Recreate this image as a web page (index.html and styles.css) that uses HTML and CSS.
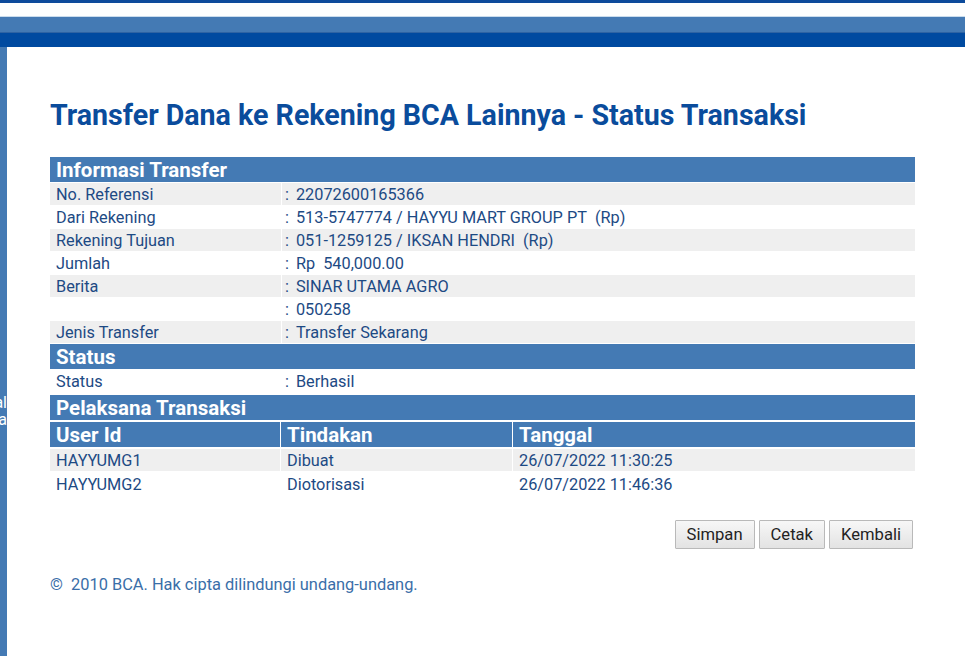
FILE: index.html
```html
<!DOCTYPE html>
<html lang="id">
<head>
  <meta charset="UTF-8" />
  <title>KlikBCA • Status Transaksi</title>
  <link rel="stylesheet" href="styles.css">
</head>
<body>

<header class="topbar">
  <div class="topbar-line"></div>
  <div class="topbar-gap"></div>
  <div class="topbar-mid"></div>
  <div class="topbar-dark"></div>
</header>

<div class="frame">
  <aside class="sidebar">
    <span class="side-word">al</span>
    <span class="side-word">a</span>
  </aside>

  <main class="content">
    <h1 class="page-title">Transfer Dana ke Rekening BCA Lainnya - Status Transaksi</h1>

    <table class="info-table">
      <tr><th colspan="2" class="section-head">Informasi Transfer</th></tr>
      <tr class="shade"><td class="label">No. Referensi</td><td class="value"><span class="colon">:</span>22072600165366</td></tr>
      <tr><td class="label">Dari Rekening</td><td class="value"><span class="colon">:</span>513-5747774 / HAYYU MART GROUP PT&nbsp; (Rp)</td></tr>
      <tr class="shade"><td class="label">Rekening Tujuan</td><td class="value"><span class="colon">:</span>051-1259125 / IKSAN HENDRI&nbsp; (Rp)</td></tr>
      <tr><td class="label">Jumlah</td><td class="value"><span class="colon">:</span>Rp&nbsp; 540,000.00</td></tr>
      <tr class="shade"><td class="label">Berita</td><td class="value"><span class="colon">:</span>SINAR UTAMA AGRO</td></tr>
      <tr><td class="label"></td><td class="value"><span class="colon">:</span>050258</td></tr>
      <tr class="shade"><td class="label">Jenis Transfer</td><td class="value"><span class="colon">:</span>Transfer Sekarang</td></tr>
      <tr><th colspan="2" class="section-head">Status</th></tr>
      <tr><td class="label">Status</td><td class="value"><span class="colon">:</span>Berhasil</td></tr>
    </table>

    <table class="info-table actor-table">
      <tr><th colspan="3" class="section-head">Pelaksana Transaksi</th></tr>
      <tr class="col-head">
        <th class="col-user">User Id</th>
        <th class="col-action">Tindakan</th>
        <th>Tanggal</th>
      </tr>
      <tr class="shade"><td>HAYYUMG1</td><td>Dibuat</td><td>26/07/2022 11:30:25</td></tr>
      <tr><td>HAYYUMG2</td><td>Diotorisasi</td><td>26/07/2022 11:46:36</td></tr>
    </table>

    <div class="actions">
      <button class="btn">Simpan</button>
      <button class="btn">Cetak</button>
      <button class="btn">Kembali</button>
    </div>

    <p class="copyright">©&nbsp; 2010 BCA. Hak cipta dilindungi undang-undang.</p>
  </main>
</div>

</body>
</html>
```

FILE: styles.css
```css
:root {
  --navy: #0a4c9c;
  --band: #447ab4;
  --band-dark: #004aa0;
  --row: #efefef;
  --ink: #1d4a84;
}

* { margin: 0; padding: 0; box-sizing: border-box; }

html, body {
  height: 100%;
  background: #fff;
  font-family: Roboto, "Liberation Sans", sans-serif;
  overflow: hidden;
}

/* top bands */
.topbar-line { height: 3px; background: #0b4a9b; }
.topbar-gap { height: 14px; background: #fdfefe; border-bottom: 1px solid #c9dced; }
.topbar-mid { height: 16px; background: var(--band); border-bottom: 1px solid #2e63a3; }
.topbar-dark { height: 14px; background: var(--band-dark); }

.frame {
  display: flex;
  height: calc(100% - 48px);
}

.sidebar {
  width: 7px;
  flex-shrink: 0;
  background: var(--band);
  overflow: hidden;
  display: flex;
  flex-direction: column;
  padding-top: 347px;
}

.side-word {
  display: flex;
  justify-content: flex-end;
  color: #fff;
  font-size: 16px;
  line-height: 17px;
  white-space: nowrap;
}

.content {
  padding: 51px 0 0 43px;
  width: 908px;
}

.page-title {
  color: var(--navy);
  font-size: 28.6px;
  font-weight: 700;
  margin-bottom: 24px;
}

.info-table {
  width: 867px;
  margin-left: -1px;
  border-collapse: separate;
  border-spacing: 1px;
  color: var(--ink);
  font-size: 16.3px;
}

.info-table td {
  height: 22px;
  padding: 0 6px;
  vertical-align: middle;
  white-space: nowrap;
}

.info-table .shade td { background: var(--row); }

.section-head,
.col-head th {
  height: 25px;
  background: var(--band);
  color: #fff;
  font-size: 20.5px;
  font-weight: 700;
  text-align: left;
  padding: 0 6px;
}

.label { width: 231px; }

.info-table td.value { padding-left: 3px; }

.colon { margin-right: 7px; }

.actor-table {
  border-spacing: 1px 2px;
  margin-top: 0;
}
.col-user { width: 230px; }
.col-action { width: 231px; }

.actions {
  display: flex;
  justify-content: flex-end;
  gap: 4px;
  width: 863px;
  margin-top: 23px;
}

.btn {
  height: 29px;
  padding: 0 11px;
  font-family: Roboto, "Liberation Sans", sans-serif;
  font-size: 16.6px;
  color: #222;
  background: linear-gradient(#f7f7f7, #e3e3e3);
  border: 1px solid #b9b9b9;
  border-radius: 1px;
}

.copyright {
  margin-top: 26px;
  color: #3a6ea8;
  font-size: 16.4px;
}
```
